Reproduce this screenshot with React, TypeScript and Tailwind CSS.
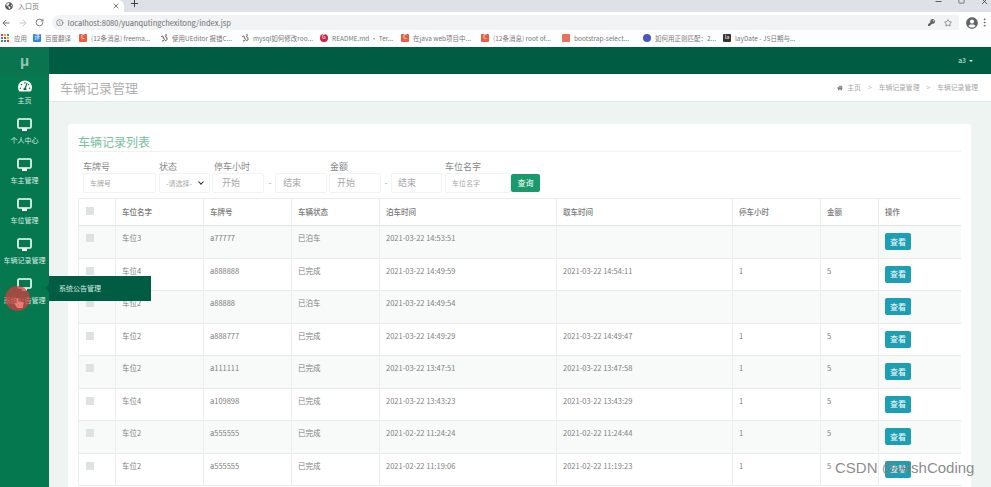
import { ArrowLeft, ArrowRight, Info, Minus, MoreVertical, Plus, RotateCw, Square, Star, X } from 'lucide-react';
import { FaGlobeAmericas, FaHandPointer, FaHome, FaKey, FaTachometerAlt, FaUserCircle } from 'react-icons/fa';

const bookmarks = [
  { label: '百度翻译', color: 'bg-[#2f86d8]', glyph: '译', width: 'w-[46px]' },
  { label: '(12条消息) freema...', color: 'bg-[#e8603c]', glyph: 'C', width: 'w-[81px]' },
  { label: '使用UEditor 报错C...', color: 'bg-white', glyph: '', width: 'w-[81px]' },
  { label: 'mysql如何修改roo...', color: 'bg-white', glyph: '', width: 'w-[79px]' },
  { label: 'README.md · Ter...', color: 'bg-[#c9243f] rounded-full', glyph: 'G', width: 'w-[81px]' },
  { label: '在java web项目中...', color: 'bg-[#e8603c]', glyph: 'C', width: 'w-[80px]' },
  { label: '(12条消息) root of...', color: 'bg-[#e8603c]', glyph: 'C', width: 'w-[81px]' },
  { label: 'bootstrap-select...', color: 'bg-[#e8705c]', glyph: '', width: 'w-[81px]' },
  { label: '如何用正则匹配：2...', color: 'bg-[#4a55c8] rounded-full', glyph: '', width: 'w-[80px]' },
  { label: 'layDate - JS日期与...', color: 'bg-[#333333]', glyph: 'la', width: 'w-[90px]' },
];

const appDots = ['#d9453a', '#e8a33c', '#3e9a5a', '#3b78d8', '#d9453a', '#e8a33c', '#3e9a5a', '#3b78d8', '#d9453a'];

const menu = ['个人中心', '车主管理', '车位管理', '车辆记录管理', '系统公告管理'];

const rows = [
  ['车位3', 'a77777', '已泊车', '2021-03-22 14:53:51', '', '', ''],
  ['车位4', 'a888888', '已完成', '2021-03-22 14:49:59', '2021-03-22 14:54:11', '1', '5'],
  ['车位2', 'a88888', '已泊车', '2021-03-22 14:49:54', '', '', ''],
  ['车位2', 'a888777', '已完成', '2021-03-22 14:49:29', '2021-03-22 14:49:47', '1', '5'],
  ['车位2', 'a111111', '已完成', '2021-03-22 13:47:51', '2021-03-22 13:47:58', '1', '5'],
  ['车位4', 'a109898', '已完成', '2021-03-22 13:43:23', '2021-03-22 13:43:29', '1', '5'],
  ['车位2', 'a555555', '已完成', '2021-02-22 11:24:24', '2021-02-22 11:24:44', '1', '5'],
  ['车位2', 'a555555', '已完成', '2021-02-22 11:19:06', '2021-02-22 11:19:23', '1', '5'],
];

const headers = ['车位名字', '车牌号', '车辆状态', '泊车时间', '取车时间', '停车小时', '金额', '操作'];

const inputClass =
  'h-[20px] border border-[#f1f3f2] rounded-[2px] flex items-center text-[#a8a8a8] bg-white';

function Checkbox() {
  return <div className="w-[8px] h-[8px] bg-[#dfe2e3]" />;
}

export default function App() {
  return (
    <div className="relative w-[991px] h-[487px] overflow-hidden bg-[#edf4f2] font-['Noto_Sans_CJK_SC','Liberation_Sans',sans-serif]">
      {/* Browser tabs */}
      <div className="h-[12px] flex bg-[#dee1e8] overflow-hidden">
        <div className="w-[124px] h-full bg-white flex items-center pl-[5px] rounded-tr-[6px]">
          <FaGlobeAmericas className="text-[#555] mr-[5px]" size={8} />
          <span className="text-[7px] leading-none text-[#777] flex-1">入口页</span>
          <X className="text-[#333] mr-[4px]" size={8} strokeWidth={2} />
        </div>
        <Plus className="text-[#333] ml-[5px] mt-[-2px]" size={11} strokeWidth={2} />
        <div className="ml-auto flex gap-[15px] pr-[2px]">
          <Minus className="text-[#333] mt-[-3px]" size={9} />
          <Square className="text-[#333] mt-[-3px]" size={7} strokeWidth={2} />
          <X className="text-[#333] mt-[-3px]" size={9} />
        </div>
      </div>

      {/* Address bar */}
      <div className="h-[21px] bg-white flex items-center pl-[1px] pr-[1px]">
        <ArrowLeft className="text-[#6f7276]" size={10} strokeWidth={2.4} />
        <ArrowRight className="text-[#c9cbce] ml-[7px]" size={10} strokeWidth={2.4} />
        <RotateCw className="text-[#6f7276] ml-[7px]" size={9} strokeWidth={2.4} />
        <div className="ml-[8px] h-[15px] bg-[#f1f3f4] rounded-l-full flex items-center pl-[4px] grow">
          <Info className="text-[#666]" size={7.5} />
          <span className="ml-[4px] text-[7.5px] leading-none text-[#6a6e72]">localhost:8080/yuanqutingchexitong/index.jsp</span>
          <div className="ml-auto flex items-center gap-[9px] pr-[7px]">
            <FaKey className="text-[#5f6368]" size={7} />
            <Star className="text-[#5f6368]" size={8} />
          </div>
        </div>
        <FaUserCircle className="text-[#5f6368] ml-[7px]" size={12} />
        <MoreVertical className="text-[#5f6368] ml-[1px]" size={11} />
      </div>

      {/* Bookmarks */}
      <div className="h-[14px] bg-white flex items-start pl-[1px] overflow-hidden">
        <div className="w-[32px] flex-none flex items-center gap-[5px]">
          <span className="w-[8px] grid grid-cols-3 gap-[1px] flex-none">
            {appDots.map((c, i) => (
              <svg key={i} width="2" height="2" viewBox="0 0 2 2">
                <rect width="2" height="2" fill={c} />
              </svg>
            ))}
          </span>
          <span className="text-[6.5px] leading-[10px] text-[#777]">应用</span>
        </div>
        {bookmarks.map((b) => (
          <div key={b.label} className={`${b.width} flex-none flex items-center gap-[4px] whitespace-nowrap`}>
            <span className={`w-[8px] h-[8px] rounded-[1px] flex-none flex items-center justify-center text-[5.5px] leading-none text-white ${b.color}`}>
              {b.glyph}
              {b.color === 'bg-white' && (
                <svg width="8" height="8" viewBox="0 0 8 8" fill="none" stroke="#555" strokeWidth="1">
                  <path d="M1 3 C3 1 4 3 3 4 C5 4 5 7 2 7 M5 3 C6 2 7 3 7 5 C7 7 5 7 5 6 M5 1 L7 1" />
                </svg>
              )}
            </span>
            <span className="text-[6.5px] leading-[10px] text-[#777]">{b.label}</span>
          </div>
        ))}
      </div>

      <div className="h-[440px] flex">
        {/* Sidebar */}
        <div className="w-[49px] flex-none bg-[#05784f] flex flex-col items-center">
          <div className="h-[27px] w-full bg-[#0a7350] flex items-center justify-center text-[15px] font-bold leading-none text-[#9cc4b4] font-['Liberation_Sans',sans-serif]">
            μ
          </div>
          <div className="h-[40px] flex flex-none flex-col items-center pt-[5px]">
            <FaTachometerAlt className="text-white" size={14} />
            <span className="mt-[3px] text-[7px] leading-[9px] text-[#d8ebe3]">主页</span>
          </div>
          {menu.map((m) => (
            <div key={m} className="h-[40px] flex flex-col items-center pt-[4px] flex-none w-full">
              <svg width="15" height="14" viewBox="0 0 15 14" fill="none">
                <rect x="1" y="1" width="13" height="9" rx="1" stroke="white" strokeWidth="1.6" />
                <rect x="5" y="10.5" width="5" height="2.5" fill="white" />
              </svg>
              <span className="mt-[4px] text-[7px] leading-[9px] text-[#d8ebe3] whitespace-nowrap">{m}</span>
            </div>
          ))}
        </div>

        {/* Main */}
        <div className="flex-1 min-w-0 flex flex-col">
          <div className="h-[27px] bg-[#005c42] flex items-center justify-end pr-[18px] text-[7px] text-[#d9ebe4]">
            a3
            <span className="ml-[3px] border-x-[2px] border-t-[2px] border-x-transparent border-t-[#d9ebe4]" />
          </div>
          <div className="h-[28px] bg-white border-b border-[#e6e9e9] flex items-center pl-[11px] pr-[13px]">
            <span className="text-[13px] leading-none text-[#b0b0b0]">车辆记录管理</span>
            <div className="ml-auto flex items-center text-[6.8px] text-[#a8a8a8]">
              <FaHome size={6} className="text-[#777] mr-[4px]" />
              主页
              <span className="mx-[7px]">&gt;</span>
              车辆记录管理
              <span className="mx-[7px]">&gt;</span>
              车辆记录管理
            </div>
          </div>

          <div className="ml-[19px] mt-[22px] w-[903px] flex-1 bg-white rounded-t-[3px] px-[10px] pt-[8px]">
            <div className="h-[20px] border-b border-[#f0f2f1] text-[12px] leading-[20px] text-[#78c09c]">车辆记录列表</div>

            {/* Filters */}
            <div className="h-[46px] flex items-end pb-[5px] pl-[5px] text-[9px] text-[#888]">
              <div className="w-[76px] flex-none">
                <div className="leading-[12px]">车牌号</div>
                <div className={`${inputClass} w-[73px] pl-[6px] text-[7px]`}>车牌号</div>
              </div>
              <div className="w-[53px] flex-none">
                <div className="leading-[12px]">状态</div>
                <div className={`${inputClass} w-[51px] justify-between px-[6px] text-[7px]`}>
                  -请选择-
                  <span className="w-[4px] h-[4px] border-r border-b border-[#333] rotate-45 mt-[-3px]" />
                </div>
              </div>
              <div className="w-[53px] flex-none">
                <div className="leading-[12px] pl-[2px]">停车小时</div>
                <div className={`${inputClass} w-[52px] pl-[9px] text-[9px]`}>开始</div>
              </div>
              <div className="w-[10px] flex-none h-[20px] leading-[20px] text-center text-[#aaa]">-</div>
              <div className="w-[54px] flex-none">
                <div className={`${inputClass} w-[52px] pl-[7px] text-[9px]`}>结束</div>
              </div>
              <div className="w-[52px] flex-none">
                <div className="leading-[12px] pl-[1px]">金额</div>
                <div className={`${inputClass} w-[52px] pl-[7px] text-[9px]`}>开始</div>
              </div>
              <div className="w-[10px] flex-none h-[20px] leading-[20px] text-center text-[#aaa]">-</div>
              <div className="w-[54px] flex-none">
                <div className={`${inputClass} w-[51px] pl-[6px] text-[9px]`}>结束</div>
              </div>
              <div className="w-[66px] flex-none">
                <div className="leading-[12px]">车位名字</div>
                <div className={`${inputClass} w-[66px] pl-[6px] text-[7px]`}>车位名字</div>
              </div>
              <button className="h-[18px] w-[29px] mb-[1px] rounded-[2px] bg-[#1a9a6c] text-white text-[8px] leading-none">查询</button>
            </div>

            {/* Table */}
            <table className="w-[882px] table-fixed border-collapse text-[7.5px] text-[#808080]">
              <colgroup>
                <col className="w-[37px]" />
                <col className="w-[88px]" />
                <col className="w-[88px]" />
                <col className="w-[88px]" />
                <col className="w-[177px]" />
                <col className="w-[176px]" />
                <col className="w-[88px]" />
                <col className="w-[58px]" />
                <col className="w-[82px]" />
              </colgroup>
              <thead>
                <tr className="h-[27px] border-y border-[#eceeee] border-b-[#e2e4e4]">
                  <th className="border-l border-[#eceeee] pl-[7px] pb-[3px] align-middle">
                    <Checkbox />
                  </th>
                  {headers.map((h) => (
                    <th key={h} className="border-l border-[#eceeee] pl-[6px] text-left font-medium text-[#777]">
                      {h}
                    </th>
                  ))}
                </tr>
              </thead>
              <tbody>
                {rows.map((r, i) => (
                  <tr key={i} className={`h-[32.5px] border-b border-[#e8eaea] ${i % 2 === 0 ? 'bg-[#f8f9f9]' : 'bg-white'}`}>
                    <td className="border-l border-[#eceeee] pl-[7px] align-top pt-[8px]">
                      <Checkbox />
                    </td>
                    {r.map((c, j) => (
                      <td key={j} className="border-l border-[#eceeee] pl-[6px] align-top pt-[6px] leading-[11px]">
                        {c}
                      </td>
                    ))}
                    <td className="border-l border-[#eceeee] pl-[6px] align-top pt-[7px]">
                      <button className="w-[26px] h-[17px] rounded-[2px] bg-[#1e9eb4] text-white text-[8px] leading-none">查看</button>
                    </td>
                  </tr>
                ))}
              </tbody>
            </table>
          </div>
        </div>
      </div>

      {/* Hover tooltip on the sidebar */}
      <div className="absolute left-[49px] top-[276px] w-[102px] h-[25px] bg-[#005c42] flex items-center pl-[10px] text-[7px] text-[#d9ebe4]">
        <span className="absolute left-[-4px] top-[8px] border-y-[4px] border-r-[4px] border-y-transparent border-r-[#005c42]" />
        系统公告管理
      </div>

      {/* Recorded cursor highlight */}
      <div className="absolute left-[5px] top-[286px] w-[25px] h-[25px] rounded-full bg-[#d23c3c]/75" />
      <FaHandPointer className="absolute left-[14px] top-[298px] text-[#f47a7a]" size={10} />

      {/* Watermark */}
      <div className="absolute left-[835px] top-[459px] text-[15px] leading-[18px] text-[#7d7d7d]/90 font-['Liberation_Sans',sans-serif]">
        CSDN @wishCoding
      </div>
    </div>
  );
}
